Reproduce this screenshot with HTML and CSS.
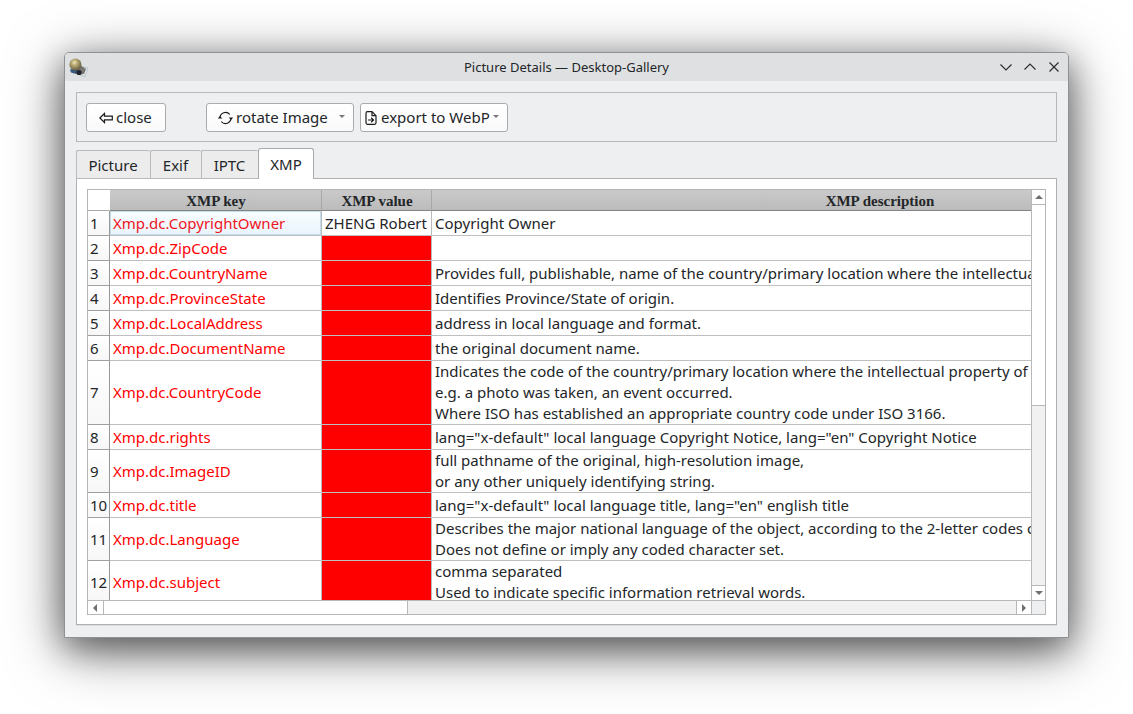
FILE: index.html
```
<!DOCTYPE html>
<html lang="en">
<head>
<meta charset="utf-8">
<title>Picture Details — Desktop-Gallery</title>
<link rel="stylesheet" href="styles.css">
</head>
<body>
<main class="window">
  <header class="titlebar">
    <svg class="app-icon" width="20" height="20" viewBox="0 0 20 20">
      <defs><radialGradient id="ball" cx=".42" cy=".35" r=".7"><stop offset="0" stop-color="#f0e6bd"/><stop offset=".35" stop-color="#b8a873"/><stop offset="1" stop-color="#5b553a"/></radialGradient></defs>
      <path d="M14 9l5 1-3 8.500-6-1.500z" fill="#e4e6e6" stroke="#a9bcc8" stroke-width=".7"/>
      <path d="M8 11l4-3.500 5 3.500-2 5-6 1z" fill="#777572"/>
      <path d="M1 11.500l5-1 4 2-3 3.500-5-1.500z" fill="#38587e"/>
      <circle cx="10" cy="14.500" r="2.600" fill="#20232d"/>
      <circle cx="6.400" cy="6.400" r="6" fill="url(#ball)"/>
    </svg>
    <h1 class="title">Picture Details — Desktop-Gallery</h1>
    <div class="window-buttons">
      <svg width="12" height="12" viewBox="0 0 12 12"><path d="M.5 3.5L6 9l5.500-5.500"/></svg>
      <svg width="12" height="12" viewBox="0 0 12 12"><path d="M.5 8.500L6 3l5.500 5.500"/></svg>
      <svg width="12" height="12" viewBox="0 0 12 12"><path d="M1.500 1.500l9 9M10.500 1.500l-9 9"/></svg>
    </div>
  </header>
  <div class="toolbar">
    <button class="btn btn-close"><svg width="14" height="12" viewBox="0 0 14 12"><path d="M.8 6L5.500 1.500v2.700h7.800v3.600H5.500v2.700z"/></svg><span>close</span></button>
    <button class="btn btn-rotate"><svg width="15" height="14" viewBox="0 0 15 14"><path d="M2 7A5.500 5.500 0 0 1 11.800 3.500M13 7A5.500 5.500 0 0 1 3.200 10.500"/><path class="solid" d="M-.2 7.600L2 5l2.300 2.600zM10.700 6.400h4.500L13 9z"/></svg><span>rotate Image</span><i class="drop"></i></button>
    <button class="btn btn-export"><svg width="12" height="14" viewBox="0 0 12 14"><path d="M7 .7H2.500Q1 .7 1 2.200v9.600q0 1.500 1.500 1.500h7q1.500 0 1.500-1.500V4.700zM7 .7v4h4M3 9h5M6.200 6.800L8.500 9l-2.300 2.200"/></svg><span>export to WebP</span><i class="drop"></i></button>
  </div>
  <nav class="tabs">
    <div class="tab tab-picture">Picture</div>
    <div class="tab tab-exif">Exif</div>
    <div class="tab tab-iptc">IPTC</div>
    <div class="tab tab-active">XMP</div>
  </nav>
  <section class="pane">
    <div class="table-frame">
      <div class="viewport">
        <div class="row head"><div class="corner"></div><div>XMP key</div><div>XMP value</div><div>XMP description</div></div>
        <div class="row first"><div class="num">1</div><div class="key">Xmp.dc.CopyrightOwner</div><div class="val">ZHENG Robert</div><div class="desc">Copyright Owner</div></div>
        <div class="row"><div class="num">2</div><div class="key">Xmp.dc.ZipCode</div><div class="val missing"></div><div class="desc"></div></div>
        <div class="row"><div class="num">3</div><div class="key">Xmp.dc.CountryName</div><div class="val missing"></div><div class="desc">Provides full, publishable, name of the country/primary location where the intellectual</div></div>
        <div class="row"><div class="num">4</div><div class="key">Xmp.dc.ProvinceState</div><div class="val missing"></div><div class="desc">Identifies Province/State of origin.</div></div>
        <div class="row"><div class="num">5</div><div class="key">Xmp.dc.LocalAddress</div><div class="val missing"></div><div class="desc">address in local language and format.</div></div>
        <div class="row"><div class="num">6</div><div class="key">Xmp.dc.DocumentName</div><div class="val missing"></div><div class="desc">the original document name.</div></div>
        <div class="row three"><div class="num">7</div><div class="key">Xmp.dc.CountryCode</div><div class="val missing"></div><div class="desc">Indicates the code of the country/primary location where the intellectual property of<br>e.g. a photo was taken, an event occurred.<br>Where ISO has established an appropriate country code under ISO 3166.</div></div>
        <div class="row"><div class="num">8</div><div class="key">Xmp.dc.rights</div><div class="val missing"></div><div class="desc">lang="x-default" local language Copyright Notice, lang="en" Copyright Notice</div></div>
        <div class="row two"><div class="num">9</div><div class="key">Xmp.dc.ImageID</div><div class="val missing"></div><div class="desc">full pathname of the original, high-resolution image,<br>or any other uniquely identifying string.</div></div>
        <div class="row"><div class="num">10</div><div class="key">Xmp.dc.title</div><div class="val missing"></div><div class="desc">lang="x-default" local language title, lang="en" english title</div></div>
        <div class="row two"><div class="num">11</div><div class="key">Xmp.dc.Language</div><div class="val missing"></div><div class="desc">Describes the major national language of the object, according to the 2-letter codes of<br>Does not define or imply any coded character set.</div></div>
        <div class="row two"><div class="num">12</div><div class="key">Xmp.dc.subject</div><div class="val missing"></div><div class="desc">comma separated<br>Used to indicate specific information retrieval words.</div></div>
      </div>
      <div class="vscroll"><div class="arrow up"></div><div class="thumb"></div><div class="arrow down"></div></div>
      <div class="hscroll"><div class="arrow left"></div><div class="thumb"></div><div class="arrow right"></div></div>
      <div class="scroll-corner"></div>
    </div>
  </section>
</main>
</body>
</html>
```
FILE: styles.css
```
* { box-sizing: border-box; }
body {
  margin: 0;
  width: 1133px;
  height: 714px;
  padding: 52px 64px;
  background: #fff;
  overflow: hidden;
  font: 15px/21px "Noto Sans", sans-serif;
  color: #232629;
}
.window {
  width: 1005px;
  height: 586px;
  border: 1px solid #8f9193;
  border-radius: 5px 5px 0 0;
  background: #eeeff1;
  box-shadow: 0 12px 56px rgba(0,0,0,.5), 0 10px 32px rgba(0,0,0,.4);
}
.titlebar {
  height: 28px;
  display: grid;
  grid-template-columns: 100px 1fr 100px;
  align-items: center;
  padding: 0 8px 0 4px;
  background: #dee0e2;
  border-radius: 4px 4px 0 0;
}
.app-icon { margin-top: 2px; }
.title { margin: 0 0 0 4px; text-align: center; font-size: 13px; font-weight: 400; line-height: 20px; }
.window-buttons { display: flex; gap: 12px; justify-content: flex-end; }
.window-buttons svg { fill: none; stroke: #2c2f32; stroke-width: 1.2; }
.toolbar {
  margin: 11px 11px 0;
  height: 50px;
  border: 1px solid #b5b7b9;
  padding: 10px 9px;
  display: flex;
}
.btn {
  height: 29px;
  padding: 0;
  border: 1px solid #a9abad;
  border-radius: 3px;
  background: linear-gradient(#fff, #fafafa);
  font: inherit;
  color: inherit;
  display: flex;
  align-items: center;
  white-space: nowrap;
}
.btn svg { fill: none; stroke: #181a1c; stroke-width: 1.200; flex: none; }
.btn .solid { fill: #181a1c; stroke: none; }
.btn-close { width: 80px; padding-left: 12px; gap: 3px; }
.btn-rotate { width: 148px; margin-left: 40px; padding-left: 11px; gap: 3px; }
.btn-export { width: 148px; margin-left: 6px; padding-left: 4px; gap: 4px; }
.drop { border: 3px solid transparent; border-top-color: #777; border-bottom: 0; margin: 0 8px 2px auto; }
.btn-export .drop { margin-left: -1px; }
.tabs { margin: 6px 11px 0; height: 31px; display: flex; align-items: flex-end; position: relative; }
.tab {
  height: 29px;
  border: 1px solid #b8babb;
  border-right: 0;
  border-radius: 2px 2px 0 0;
  background: #ececec;
  padding: 4px 1px 0 0;
  text-align: center;
}
.tab-picture { width: 74px; }
.tab-exif { width: 51px; }
.tab-iptc { width: 57px; }
.tab-active { width: 56px; height: 31px; border: 1px solid #a8aaac; border-bottom: 0; background: #fff; border-radius: 3px 3px 0 0; padding: 5px 0 0; }
.pane { margin: -1px 11px 0; height: 447px; width: 981px; border: 1px solid #adafb1; background: #fff; padding: 10px; box-shadow: 0 1px #dcddde; }
.table-frame {
  width: 959px;
  height: 426px;
  border: 1px solid #b6b6b6;
  display: grid;
  grid-template: 410px 14px / 943px 14px;
  background: #fff;
}
.viewport { overflow: hidden; }
.row { display: grid; grid-template-columns: 22px 212px 110px 896px; height: 25px; white-space: nowrap; }
.row > div { border-right: 1px solid #b8babb; border-bottom: 1px solid #bfbfbf; display: flex; align-items: center; padding: 1px 0 0 3px; }
.row.two { height: 43px; }
.row.three { height: 64px; }
.row.three > div { padding-top: 0; }
.row > .desc { display: block; padding: 2px 0 0 3px; }
.row.two > .desc, .row.three > .desc { padding-top: 0; }
.head { height: 21px; font: bold 15px/18px "Liberation Serif", serif; }
.head > div { justify-content: center; background: linear-gradient(#cacaca, #bbb); border-right-color: #a8a8a8; border-bottom-color: #858585; padding: 2px 0 0 1px; }
.head > .corner { background: #fff; border-right-color: #fff; border-bottom-color: #aaa; }
.row > .num { padding-left: 2px; background: linear-gradient(#fff, #f7f7f7); border-right-color: #999; border-bottom-color: #a0a0a0; }
.row > .key { color: #ff0000; }
.first > .key { color: #f0141e; background: linear-gradient(#f9fdff, #e8f4fc); box-shadow: inset 0 0 0 1px #c3ddeb; }
.missing { background: #ff0000; background-clip: padding-box; }
.vscroll { border-left: 1px solid #b8b8b8; background: #f1f1f1; display: flex; flex-direction: column; }
.hscroll { border-top: 1px solid #b8b8b8; background: #f1f1f1; display: flex; }
.arrow, .thumb { background: #fff; }
.arrow { flex: none; display: flex; align-items: center; justify-content: center; }
.arrow::before { content: ""; border: 4px solid transparent; }
.up { height: 15px; border-bottom: 1px solid #b8b8b8; }
.up::before { border-top: 0; border-bottom: 4px solid #707070; }
.down { height: 15px; border-top: 1px solid #b8b8b8; margin-top: auto; }
.down::before { border-bottom: 0; border-top: 4px solid #707070; }
.vscroll .thumb { height: 201px; border-bottom: 1px solid #b8b8b8; }
.left { width: 16px; border-right: 1px solid #b8b8b8; }
.left::before { border-left: 0; border-right: 4px solid #707070; margin-right: 2px; }
.right { width: 15px; border-left: 1px solid #b8b8b8; margin-left: auto; }
.right::before { border-right: 0; border-left: 4px solid #707070; }
.hscroll .thumb { width: 304px; border-right: 1px solid #b8b8b8; }
.scroll-corner { border: solid #b8b8b8; border-width: 1px 0 0 1px; background: #eeeff1; }
```
